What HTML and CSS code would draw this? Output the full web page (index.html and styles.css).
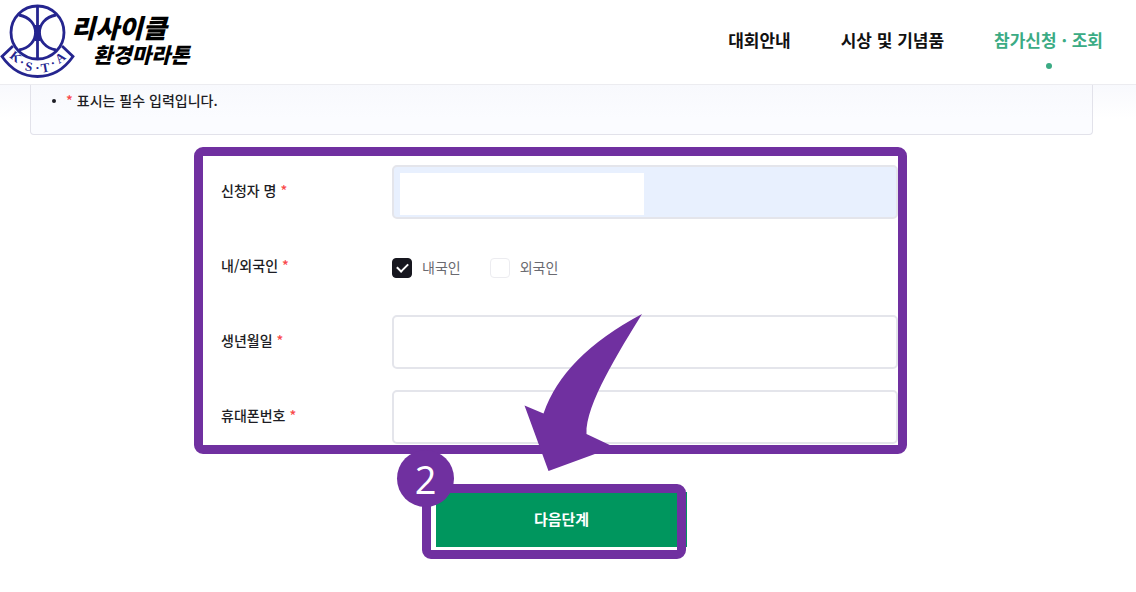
FILE: index.html
```html
<!DOCTYPE html>
<html lang="ko">
<head>
    <meta charset="UTF-8">
    <meta name="viewport" content="width=device-width, initial-scale=1.0">
    <title>리사이클 환경마라톤</title>
    <link rel="stylesheet" href="styles.css">
</head>
<body>
    <header class="header">
        <a class="logo" href="#">
            <svg class="emblem" viewBox="0 0 75 80" aria-hidden="true">
                <g fill="none" stroke="#25258f" stroke-width="2.8">
                    <circle cx="37.5" cy="32.5" r="26.5"/>
                    <path d="M37.5 5V60M19 15C41 19 41 46 19 50M56 15C34 19 34 46 56 50"/>
                    <path d="M13 46L2 56.500Q16 76.500 37.500 76.500T73 56.500L62 46"/>
                </g>
                <path d="M35 25h5v16h-5z" fill="#25258f"/>
                <g class="emblem-text">
                    <text transform="translate(13 60) rotate(38)">K</text>
                    <text transform="translate(20 66) rotate(28)">·</text>
                    <text transform="translate(28 71) rotate(10)">S</text>
                    <text x="37.500" y="72">·</text>
                    <text transform="translate(46 72) rotate(-10)">T</text>
                    <text transform="translate(55 67) rotate(-28)">·</text>
                    <text transform="translate(63 61) rotate(-38)">A</text>
                </g>
            </svg>
            <span class="logo-text">
                <span class="logo-top">리사이클</span>
                <span class="logo-bottom">환경마라톤</span>
            </span>
        </a>
        <nav class="nav">
            <a href="#">대회안내</a>
            <a href="#">시상 및 기념품</a>
            <a class="active" href="#">참가신청 · 조회</a>
        </nav>
    </header>

    <main class="content">
        <ul class="notice">
            <li><span class="required">*</span> 표시는 필수 입력입니다.</li>
        </ul>

        <form class="apply">
            <div class="fields">
                <div class="row">
                    <label class="label" for="name">신청자 명<span class="required">*</span></label>
                    <div class="control">
                        <input class="text filled" type="text" id="name">
                        <span class="mask"></span>
                    </div>
                </div>
                <div class="row">
                    <span class="label" id="nation">내/외국인<span class="required">*</span></span>
                    <div class="checks" role="group" aria-labelledby="nation">
                        <label><input type="checkbox" checked>내국인</label>
                        <label><input type="checkbox">외국인</label>
                    </div>
                </div>
                <div class="row">
                    <label class="label" for="birth">생년월일<span class="required">*</span></label>
                    <div class="control"><input class="text" type="text" id="birth"></div>
                </div>
                <div class="row">
                    <label class="label" for="phone">휴대폰번호<span class="required">*</span></label>
                    <div class="control"><input class="text" type="text" id="phone"></div>
                </div>
            </div>

            <div class="submit">
                <button type="button">다음단계</button>
                <span class="frame"></span>
                <span class="step">2</span>
                <svg class="arrow" viewBox="524 313 120 160" aria-hidden="true">
                    <path d="M642 314Q563 356 543.500 413.500L524.500 405.500L548.500 471L614 447L586.500 434C585 405 620 350 642 314Z" fill="#7030a0"/>
                </svg>
            </div>
        </form>
    </main>
</body>
</html>
```
FILE: styles.css
```css
* {
    box-sizing: border-box;
}

body {
    margin: 0;
    background-color: #fff;
    color: #1d1d24;
    font-family: "Noto Sans CJK KR", sans-serif;
    font-size: 14px;
    font-weight: 500;
}

a {
    color: inherit;
    text-decoration: none;
}

.header {
    display: flex;
    justify-content: space-between;
    align-items: center;
    height: 85px;
    padding: 0 33px 4px 0;
    border-bottom: 1px solid #ececf0;
}

.logo {
    display: flex;
    align-items: center;
    color: #000;
}

.emblem {
    width: 75px;
    height: 80px;
}

.emblem-text {
    font-family: "Liberation Serif", serif;
    font-size: 13px;
    font-weight: bold;
    fill: #25258f;
    text-anchor: middle;
}

.logo-text {
    display: flex;
    flex-direction: column;
    margin-left: -4px;
    font-style: italic;
    font-weight: 900;
}

.logo-top {
    font-size: 26px;
    line-height: 29px;
}

.logo-bottom {
    padding-left: 22px;
    font-size: 21px;
    line-height: 27px;
}

.nav {
    display: flex;
    gap: 50px;
    color: #111;
    font-size: 17px;
    font-weight: 700;
    line-height: 28px;
}

.nav a {
    position: relative;
}

.nav .active {
    color: #3bab84;
}

.nav .active::after {
    content: "";
    position: absolute;
    bottom: -15px;
    left: 50%;
    width: 6px;
    height: 6px;
    margin-left: -3px;
    border-radius: 50%;
    background-color: #3bab84;
}

.content {
    padding: 0 43px 40px 30px;
    background: linear-gradient(#f8f9fd, #fff 34px);
}

.notice {
    margin: 0 0 12px;
    padding: 3px 20px 21px;
    border: 1px solid #e2e2ea;
    border-top: none;
    border-radius: 0 0 4px 4px;
    background: linear-gradient(#f8f9fd, #fbfcff 34px);
    line-height: 25px;
    list-style: none;
}

.notice li {
    display: flex;
    align-items: center;
    gap: 4px;
}

.notice li::before {
    content: "";
    width: 4px;
    height: 4px;
    margin: 0 6px 0 1px;
    border-radius: 50%;
    background-color: #1d1d24;
}

.required {
    color: #f9494b;
}

.apply {
    max-width: 735px;
    margin: 0 auto;
}

.fields {
    display: grid;
    gap: 21px;
    margin-right: 22px;
    padding: 9px 0 1px 18px;
    border: 9px solid #7030a0;
    border-radius: 9px;
}

.row {
    display: grid;
    grid-template-columns: 171px 1fr;
    align-items: center;
    height: 54px;
}

.label {
    padding-bottom: 4px;
}

.label .required {
    margin-left: 4px;
}

.control {
    position: relative;
}

.text {
    display: block;
    width: 100%;
    height: 54px;
    padding: 0 16px;
    border: 2px solid #e4e5eb;
    border-radius: 5px;
    background-color: #fff;
    font: inherit;
}

.filled {
    background-color: #e8f0fe;
}

.mask {
    position: absolute;
    top: 8px;
    left: 8px;
    width: 244px;
    height: 42px;
    background-color: #fff;
}

.checks {
    display: flex;
    gap: 29px;
    color: #6a6a70;
    font-weight: 400;
}

.checks label {
    display: flex;
    align-items: center;
    gap: 10px;
}

.checks input {
    display: grid;
    place-items: center;
    width: 20px;
    height: 20px;
    margin: 2px 0 0;
    appearance: none;
    border: 1px solid #ececf0;
    border-radius: 4px;
    background-color: #fff;
}

.checks input:checked {
    border-color: #17171f;
    background-color: #17171f;
}

.checks input:checked::before {
    content: "";
    width: 9px;
    height: 5px;
    margin-bottom: 3px;
    border: solid #fff;
    border-width: 0 0 2px 2px;
    transform: rotate(-45deg);
}

.submit {
    position: relative;
    width: 251px;
    margin: 38px auto 0;
}

.submit button {
    display: block;
    width: 100%;
    height: 55px;
    padding: 0 0 2px;
    border: none;
    background-color: #00965e;
    color: #fff;
    font: inherit;
    font-size: 15px;
    font-weight: 700;
}

.frame {
    position: absolute;
    inset: -8px 1px -12px -14px;
    border: 9px solid #7030a0;
    border-radius: 9px;
}

.step {
    position: absolute;
    top: -42px;
    left: -39px;
    width: 57px;
    height: 57px;
    border-radius: 50%;
    background-color: #7030a0;
    color: #fff;
    font-family: "Open Sans", sans-serif;
    font-size: 38px;
    font-weight: 400;
    line-height: 59px;
    text-align: center;
}

.arrow {
    position: absolute;
    top: -179px;
    left: 88px;
    width: 120px;
    height: 160px;
}
```
